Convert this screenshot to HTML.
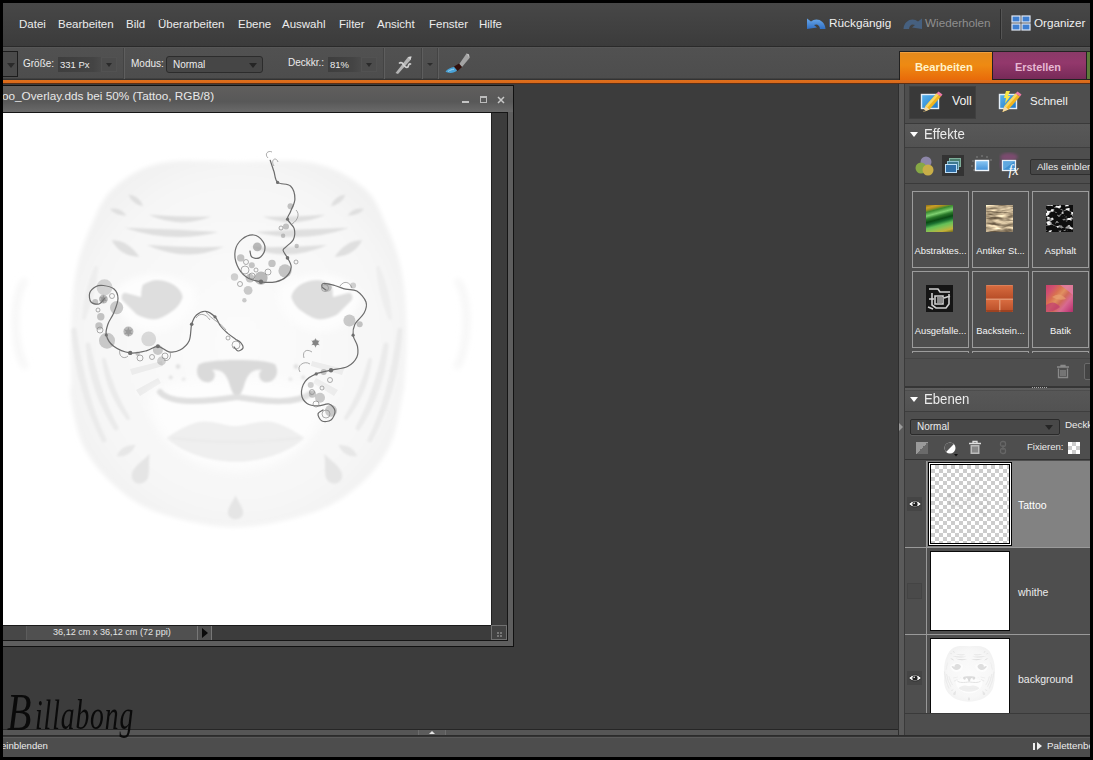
<!DOCTYPE html>
<html lang="de">
<head>
<meta charset="utf-8">
<title>Tattoo_Overlay.dds</title>
<style>
*{box-sizing:border-box;margin:0;padding:0}
html,body{width:1093px;height:760px;overflow:hidden;background:#000}
body{position:relative;font-family:"Liberation Sans",sans-serif;font-size:11px;color:#e6e6e6}
.a{position:absolute}
.t{position:absolute;white-space:nowrap;line-height:14px}
#app{position:absolute;left:3px;top:3px;width:1087px;height:754px;background:#3c3c3c;overflow:hidden}
/* all children of #app use page coords via offset wrapper */
#pg{position:absolute;left:-3px;top:-3px;width:1093px;height:760px}
#menubar{left:3px;top:3px;width:1087px;height:44px;background:linear-gradient(#474747,#404040 60%,#3b3b3b)}
#optbar{left:3px;top:47px;width:1087px;height:33px;background:linear-gradient(#5a5a5a 0,#515151 4%,#4d4d4d 94%,#333 97%)}
#orange{left:3px;top:80px;width:1087px;height:4px;background:linear-gradient(#e0701c 0,#d8681a 74%,#5a3018 76%)}
.menu{top:17px;font-size:11.5px;color:#ececec}
.tri{width:0;height:0;border-style:solid;border-width:5px 4px 0 4px;border-color:#222 transparent transparent transparent}
.opt{font-size:10px;color:#ececec}
.chk{background-color:#fff;background-image:linear-gradient(45deg,#ccc 25%,transparent 25%,transparent 75%,#ccc 75%),linear-gradient(45deg,#ccc 25%,transparent 25%,transparent 75%,#ccc 75%)}
.cell{width:57px;height:77px;border:1px solid #9c9c9c;background:#4e4e4e}
.th{width:27px;height:27px}
.lbl{width:57px;text-align:center;font-size:9.4px;color:#f4f4f4}
.sg{font-family:'Liberation Serif','DejaVu Serif',serif;font-style:italic;line-height:normal;color:#0a0a0a}
</style>
</head>
<body>
<div id="app"><div id="pg">

<!-- MENU BAR -->
<div class="a" id="menubar"></div>
<div class="a" style="left:3px;top:46px;width:1087px;height:1px;background:#2a2a2a"></div>
<div class="t menu" style="left:19px">Datei</div>
<div class="t menu" style="left:58px">Bearbeiten</div>
<div class="t menu" style="left:126px">Bild</div>
<div class="t menu" style="left:158px">Überarbeiten</div>
<div class="t menu" style="left:238px">Ebene</div>
<div class="t menu" style="left:282px">Auswahl</div>
<div class="t menu" style="left:339px">Filter</div>
<div class="t menu" style="left:377px">Ansicht</div>
<div class="t menu" style="left:429px">Fenster</div>
<div class="t menu" style="left:479px">Hilfe</div>

<!-- OPTIONS BAR -->
<div class="a" id="optbar"></div>
<div class="a" id="orange"></div>

<!-- WORKSPACE / DOCUMENT -->
<!-- options bar content -->
<div class="a" style="left:3px;top:51px;width:15px;height:26px;border:1px solid #1c1c1c;border-left:none;background:#4a4a4a"></div>
<div class="a tri" style="left:7px;top:63px;border-top-color:#2a2a2a"></div>
<div class="t opt" style="left:23px;top:57px">Größe:</div>
<div class="a" style="left:58px;top:57px;width:59px;height:15px;background:linear-gradient(90deg,#3e3e3e,#444 60%,#4c4c4c 75%)"></div>
<div class="a" style="left:101px;top:57px;width:16px;height:15px;background:#4c4c4c;border:1px solid #525252"></div>
<div class="a tri" style="left:106px;top:63px;border-width:4px 3px 0 3px;border-top-color:#2a2a2a"></div>
<div class="t opt" style="left:60px;top:58px;font-size:9.500px">331 Px</div>
<div class="a" style="left:123px;top:48px;width:1px;height:31px;background:#444"></div>
<div class="a" style="left:124px;top:48px;width:1px;height:31px;background:#5e5e5e"></div>
<div class="t opt" style="left:131px;top:57px">Modus:</div>
<div class="a" style="left:166px;top:56px;width:97px;height:17px;background:#464646;border:1px solid #2c2c2c;border-radius:3px"></div>
<div class="t opt" style="left:173px;top:58px">Normal</div>
<div class="a tri" style="left:249px;top:63px;border-top-color:#252525"></div>
<div class="t opt" style="left:288px;top:56px">Deckkr.:</div>
<div class="a" style="left:328px;top:57px;width:49px;height:15px;background:linear-gradient(90deg,#3e3e3e,#444 50%,#4c4c4c 70%)"></div>
<div class="a" style="left:361px;top:57px;width:16px;height:15px;background:#4c4c4c;border:1px solid #525252"></div>
<div class="a tri" style="left:366px;top:63px;border-width:4px 3px 0 3px;border-top-color:#2a2a2a"></div>
<div class="t opt" style="left:330px;top:58px;font-size:9.500px">81%</div>
<div class="a" style="left:383px;top:48px;width:1px;height:31px;background:#444"></div>
<div class="a" style="left:384px;top:48px;width:1px;height:31px;background:#5e5e5e"></div>
<div class="a" style="left:421px;top:48px;width:1px;height:31px;background:#444"></div>
<div class="a" style="left:422px;top:48px;width:1px;height:31px;background:#5e5e5e"></div>
<div class="a" style="left:437px;top:48px;width:1px;height:31px;background:#444"></div>
<div class="a" style="left:438px;top:48px;width:1px;height:31px;background:#5e5e5e"></div>
<svg class="a" style="left:392px;top:53px" width="24" height="24" viewBox="0 0 24 24"><path d="M3.500 20 L16 4 L19.500 3.500 L18.500 7 L6 21Z" fill="#b4b4b4"/><path d="M16 4L19.500 3.500L18.500 7Z" fill="#d8d8d8"/><path d="M7 10.500c2.500-2.500 4 .5 5.500 2.500c1.500 2 3.500 2 4-.5c.3-1.500 1.500-2 2.500-1" stroke="#cfcfcf" stroke-width="1.700" fill="none"/></svg>
<div class="a tri" style="left:427px;top:63px;border-width:3.500px 3px 0 3px;border-top-color:#2c2c2c"></div>
<svg class="a" style="left:444px;top:50px" width="28" height="28" viewBox="0 0 28 28"><path d="M15 14.500 L22.500 3.500 L25 4.500 L25.500 8 L18 17Z" fill="#a4a4a4"/><path d="M22.500 3.500L25 4.500L25.500 8Z" fill="#c4c4c4"/><path d="M10 16.500 L15 13.500 L18 17 L13.500 21Z" fill="#32100c"/><path d="M1.500 21.500c2-2.500 5.500-4 8.500-4.500l3 3.500c-2.500 2.500-8 3.500-11.500 1z" fill="#4aa3d8"/><path d="M4 21.500c2-1.500 4-2 6-2.300" stroke="#9fd4f0" stroke-width="1" fill="none"/></svg>

<!-- document window -->
<div class="a" style="left:3px;top:85px;width:511px;height:562px;background:#111"></div>
<div class="a" style="left:3px;top:86px;width:510px;height:560px;background:#5e5e5e"></div>
<div class="a" style="left:3px;top:86px;width:510px;height:26px;background:linear-gradient(#605e5d,#585858 60%,#6a6a6a)"></div>
<div class="a" style="left:3px;top:112px;width:505px;height:529px;background:#151515"></div>
<div class="a" style="left:3px;top:113px;width:504px;height:527px;background:#3c3c3c"></div>
<div class="t" style="left:2px;top:88.500px;font-size:11.750px;color:#e8e8e8">oo_Overlay.dds bei 50% (Tattoo, RGB/8)</div>
<div class="a" style="left:462px;top:101px;width:7px;height:2px;background:#c4c4c4"></div>
<div class="a" style="left:480px;top:96px;width:7px;height:7px;border:1px solid #bcbcbc;border-top-width:2px"></div>
<svg class="a" style="left:497px;top:96px" width="8" height="8" viewBox="0 0 8 8"><path d="M1 1L7 7M7 1L1 7" stroke="#c8c8c8" stroke-width="1.500"/></svg>
<!-- canvas -->
<div class="a" id="canvas" style="left:3px;top:113px;width:488px;height:512px;background:#fff;overflow:hidden">
<!--FACE-START-->
<svg width="488" height="513" viewBox="0 0 488 513" style="position:absolute;left:0;top:0">
<defs>
<filter id="bl6" x="-20%" y="-20%" width="140%" height="140%"><feGaussianBlur stdDeviation="5"/></filter>
<filter id="bl4" x="-20%" y="-20%" width="140%" height="140%"><feGaussianBlur stdDeviation="3"/></filter>
<filter id="bl3" x="-20%" y="-20%" width="140%" height="140%"><feGaussianBlur stdDeviation="2"/></filter>
<filter id="bl2" x="-20%" y="-20%" width="140%" height="140%"><feGaussianBlur stdDeviation="1.1"/></filter>
<filter id="bl1" x="-20%" y="-20%" width="140%" height="140%"><feGaussianBlur stdDeviation=".6"/></filter>
<radialGradient id="fg" cx="50%" cy="50%" r="56%"><stop offset="0" stop-color="#fbfbfb"/><stop offset=".75" stop-color="#f7f7f7"/><stop offset="1" stop-color="#f1f1f1"/></radialGradient>
</defs>
<g transform="translate(-3,-113)">
<g filter="url(#bl4)" fill="none" stroke="#f3f3f3" stroke-width="5"><path d="M26 280C12 290 12 350 26 368"/><path d="M456 280C470 290 470 350 456 368"/></g>
<g id="facecore">
<path filter="url(#bl3)" fill="url(#fg)" d="M161.0 163.0C181.6 158.7 211.7 162.0 237.0 162.0C262.3 162.0 291.8 158.7 313.0 163.0C334.2 167.3 351.8 177.7 364.0 188.0C376.2 198.3 379.8 211.5 386.0 225.0C392.2 238.5 397.6 252.5 401.0 269.0C404.4 285.5 405.9 305.7 406.5 324.0C407.1 342.3 405.4 366.7 404.6 379.0C403.9 391.3 404.4 387.0 402.0 398.0C399.6 409.0 396.8 430.8 390.0 445.0C383.2 459.2 374.2 471.8 361.5 483.0C348.8 494.2 335.0 504.7 314.0 512.0C293.0 519.3 261.7 527.0 235.5 527.0C209.3 527.0 177.6 519.3 157.0 512.0C136.4 504.7 124.3 494.2 112.0 483.0C99.7 471.8 89.8 459.2 83.0 445.0C76.2 430.8 72.9 409.0 71.0 398.0C69.1 387.0 71.5 391.3 71.5 379.0C71.5 366.7 70.4 342.3 71.3 324.0C72.2 305.7 73.4 285.5 76.8 269.0C80.2 252.5 85.4 238.5 91.6 225.0C97.8 211.5 102.1 198.3 113.7 188.0C125.3 177.7 140.4 167.3 161.0 163.0Z"/>
<g filter="url(#bl2)" fill="#dfdfdf">
<path d="M148.700 214.800Q180 217 211.300 216.600Q180 229 148.700 214.800Z"/>
<path d="M124.700 227.700Q172 229 218.600 232Q172 244 124.700 227.700Z"/>
<path d="M146.800 245Q187 248 224 246.800Q187 263 146.800 245Z"/>
<path d="M111.800 240.200Q128 240 139.400 257Q120 256 111.800 240.200Z"/>
<path d="M128.400 194.500Q140 196 143 206.300Q132 204 128.400 194.500Z"/>
<path d="M110 209Q120 207 126.500 215.500Q116 216 110 209Z"/>
<path d="M74 330Q78 390 104 440Q84 400 74 330Z" stroke="#ebebeb" stroke-width="5" stroke-linejoin="round" fill="#ebebeb"/>
<path d="M88 345Q92 390 116 428Q98 395 88 345Z" stroke="#ebebeb" stroke-width="5" stroke-linejoin="round" fill="#ebebeb"/>
<path d="M104 360Q108 392 128 418Q112 392 104 360Z" stroke="#ebebeb" stroke-width="4" stroke-linejoin="round" fill="#ebebeb"/>
<path d="M96 268Q86 290 84 318Q94 292 96 268Z" stroke="#eeeeee" stroke-width="4" stroke-linejoin="round" fill="#eeeeee"/>
<path fill="#e5e5e5" d="M149.900 453.700C148 462 150 470 148 478C144 486 134 485 132 478C130 468 142 462 149.900 453.700Z"/>
<path fill="#e7e7e7" d="M116.600 456Q122 444 135.600 445Q130 458 116.600 456Z"/>
<circle cx="178" cy="366.500" r="2.200"/><circle cx="170.800" cy="377.600" r="2"/><circle cx="183.600" cy="379.400" r="2"/>
</g>
<path filter="url(#bl4)" fill="#fdfdfd" d="M112 296C125 272 165 266 196 288C200 310 178 334 150 332C128 330 118 312 112 296Z"/>
<path filter="url(#bl2)" fill="#dedede" stroke="#fefefe" stroke-width="3.500" paint-order="stroke" d="M142.500 285C147 282 152 280 157.100 280C165 280 172 283 176.200 286.600C180 290 182 293 182.800 296.900C181 303 177 308 171.800 311.500C166 316 160 319 154.200 319.500C147 319 141 317 136.600 314.400L123 301Q119 296 124.500 292.500L141 297Q141 290 142.500 285Z"/>
<g filter="url(#bl1)" fill="#ececec"><path d="M130 369L162 361L163 366L132 375Z"/><path d="M136 390L158 378L161 383L140 396Z"/></g>
<g transform="translate(474,0) scale(-1,1)"><g filter="url(#bl2)" fill="#dfdfdf">
<path d="M148.700 214.800Q180 217 211.300 216.600Q180 229 148.700 214.800Z"/>
<path d="M124.700 227.700Q172 229 218.600 232Q172 244 124.700 227.700Z"/>
<path d="M146.800 245Q187 248 224 246.800Q187 263 146.800 245Z"/>
<path d="M111.800 240.200Q128 240 139.400 257Q120 256 111.800 240.200Z"/>
<path d="M128.400 194.500Q140 196 143 206.300Q132 204 128.400 194.500Z"/>
<path d="M110 209Q120 207 126.500 215.500Q116 216 110 209Z"/>
<path d="M74 330Q78 390 104 440Q84 400 74 330Z" stroke="#ebebeb" stroke-width="5" stroke-linejoin="round" fill="#ebebeb"/>
<path d="M88 345Q92 390 116 428Q98 395 88 345Z" stroke="#ebebeb" stroke-width="5" stroke-linejoin="round" fill="#ebebeb"/>
<path d="M104 360Q108 392 128 418Q112 392 104 360Z" stroke="#ebebeb" stroke-width="4" stroke-linejoin="round" fill="#ebebeb"/>
<path d="M96 268Q86 290 84 318Q94 292 96 268Z" stroke="#eeeeee" stroke-width="4" stroke-linejoin="round" fill="#eeeeee"/>
<path fill="#e5e5e5" d="M149.900 453.700C148 462 150 470 148 478C144 486 134 485 132 478C130 468 142 462 149.900 453.700Z"/>
<path fill="#e7e7e7" d="M116.600 456Q122 444 135.600 445Q130 458 116.600 456Z"/>
<circle cx="178" cy="366.500" r="2.200"/><circle cx="170.800" cy="377.600" r="2"/><circle cx="183.600" cy="379.400" r="2"/>
</g>
<path filter="url(#bl4)" fill="#fdfdfd" d="M112 296C125 272 165 266 196 288C200 310 178 334 150 332C128 330 118 312 112 296Z"/>
<path filter="url(#bl2)" fill="#dedede" stroke="#fefefe" stroke-width="3.500" paint-order="stroke" d="M142.500 285C147 282 152 280 157.100 280C165 280 172 283 176.200 286.600C180 290 182 293 182.800 296.900C181 303 177 308 171.800 311.500C166 316 160 319 154.200 319.500C147 319 141 317 136.600 314.400L123 301Q119 296 124.500 292.500L141 297Q141 290 142.500 285Z"/>
<g filter="url(#bl1)" fill="#ececec"><path d="M130 369L162 361L163 366L132 375Z"/><path d="M136 390L158 378L161 383L140 396Z"/></g></g>
<path filter="url(#bl6)" fill="#fdfdfd" d="M150 392C170 372 300 372 324 392C330 420 300 470 237 472C174 470 144 420 150 392Z"/>
<g filter="url(#bl2)">
<path fill="#dadada" d="M198 366C198 358 276 358 276 366C280 376 272 384 264 382C258 380 258 372 262 370C250 368 246 378 244 386C242 392 240 396 237 396C234 396 232 392 230 386C228 378 224 368 212 370C216 372 216 380 210 382C202 384 194 376 198 366Z"/>
<path fill="none" stroke="#e0e0e0" stroke-width="6" stroke-linecap="round" d="M160 392C170 404 205 402 237 397C269 402 296 404 310 394"/>
<path fill="#efefef" d="M166.500 438C180 428 195 421 204.600 421.400C215 421 226 426 235.500 426C245 426 256 421 266.400 421.400C276 421 291 428 304.500 438C290 452 262 462 235.500 461.800C209 462 181 452 166.500 438Z"/>
<path fill="none" stroke="#e8e8e8" stroke-width="1.500" d="M172 438Q236 446 300 438"/>
<path fill="#e5e5e5" d="M235.500 495C238 502 244 508 243 514C241 521 230 521 228 514C227 508 233 502 235.500 495Z"/>
</g>
</g>
<g id="swirls">
<g fill="#8e8e8e" filter="url(#bl1)"><circle cx="257.3" cy="246.8" r="4.4" opacity="0.60"/><circle cx="240.7" cy="257.9" r="3.7" opacity="0.50"/><circle cx="251.8" cy="265.2" r="3.0" opacity="0.50"/><circle cx="261.0" cy="278.1" r="6.6" opacity="0.60"/><circle cx="250.0" cy="278.1" r="4.4" opacity="0.50"/><circle cx="285.0" cy="270.8" r="6.6" opacity="0.50"/><circle cx="272.0" cy="263.4" r="3.7" opacity="0.50"/><circle cx="248.1" cy="290.3" r="4.4" opacity="0.45"/><circle cx="244.4" cy="300.2" r="2.2" opacity="0.45"/><circle cx="234.5" cy="277.0" r="3.7" opacity="0.40"/><circle cx="290.5" cy="206.3" r="3.0" opacity="0.50"/><circle cx="286.0" cy="226.6" r="3.0" opacity="0.50"/><circle cx="296.7" cy="246.0" r="2.2" opacity="0.50"/><circle cx="283.1" cy="235.8" r="2.2" opacity="0.50"/><circle cx="104.5" cy="287.3" r="8.0" opacity="0.35"/><circle cx="103.4" cy="299.1" r="4.4" opacity="0.60"/><circle cx="95.2" cy="302.0" r="3.0" opacity="0.50"/><circle cx="116.6" cy="307.6" r="6.6" opacity="0.45"/><circle cx="100.8" cy="316.8" r="3.7" opacity="0.50"/><circle cx="99.0" cy="326.0" r="3.7" opacity="0.50"/><circle cx="107.0" cy="340.7" r="8.0" opacity="0.45"/><circle cx="128.4" cy="331.5" r="5.0" opacity="0.60"/><circle cx="148.7" cy="338.9" r="7.4" opacity="0.30"/><circle cx="157.9" cy="350.0" r="5.0" opacity="0.45"/><circle cx="161.5" cy="361.0" r="4.4" opacity="0.40"/><circle cx="137.6" cy="353.6" r="2.2" opacity="0.50"/><circle cx="327.3" cy="287.3" r="4.4" opacity="0.40"/><circle cx="353.1" cy="285.5" r="3.0" opacity="0.40"/><circle cx="349.4" cy="320.5" r="6.0" opacity="0.45"/><circle cx="359.7" cy="324.2" r="3.0" opacity="0.50"/><circle cx="315.5" cy="342.6" r="3.0" opacity="0.70"/><circle cx="323.6" cy="372.0" r="3.0" opacity="0.50"/><circle cx="312.5" cy="394.1" r="3.7" opacity="0.45"/><circle cx="320.0" cy="397.8" r="5.0" opacity="0.45"/><circle cx="331.0" cy="410.7" r="6.0" opacity="0.45"/><circle cx="310.7" cy="385.0" r="3.0" opacity="0.40"/></g>
<g fill="none" stroke="#6c6c6c" stroke-width="1.200" stroke-linecap="round">
<path d="M270.2 160.3C270.8 162.1 272.7 167.6 273.9 171.3C275.1 175.0 274.8 180.0 277.6 182.4C280.4 184.8 287.6 183.2 290.5 186.0C293.4 188.8 294.9 194.6 294.9 198.9C294.9 203.2 291.7 208.4 290.5 211.8C289.3 215.2 286.9 216.4 287.5 219.2C288.1 222.0 293.1 225.0 294.1 228.4C295.1 231.8 294.8 236.3 293.4 239.4C292.0 242.5 287.7 245.0 286.0 246.8C284.3 248.7 282.9 248.7 283.1 250.5C283.4 252.3 286.1 255.1 287.5 257.9C288.9 260.7 291.4 263.9 291.2 267.1C290.9 270.3 288.6 274.6 286.0 277.0C283.4 279.4 279.9 281.0 275.7 281.8C271.5 282.6 265.9 282.6 261.0 281.8C256.1 281.0 250.3 279.8 246.3 277.0C242.3 274.2 238.9 269.6 237.1 265.2C235.2 260.8 234.4 254.8 235.2 250.5C236.0 246.2 238.7 242.0 241.8 239.4C244.9 236.8 250.1 234.7 253.6 235.0C257.1 235.3 260.9 238.7 262.8 241.3C264.7 243.9 265.3 247.7 264.7 250.5C264.1 253.3 261.3 256.8 259.2 257.9C257.1 259.0 253.3 258.2 251.8 257.1C250.3 256.0 250.3 252.0 250.0 251.0"/>
<path d="M104.5 298.4C103.6 299.3 101.2 303.4 99.0 304.0C96.8 304.6 92.5 303.8 91.0 302.0C89.5 300.2 88.9 295.6 89.7 293.0C90.5 290.4 93.7 287.8 96.0 286.5C98.3 285.2 100.4 285.1 103.4 285.5C106.4 285.9 111.6 286.9 114.0 289.0C116.4 291.1 118.0 294.4 118.0 298.4C118.0 302.4 115.4 308.7 113.7 313.0C112.0 317.3 109.2 320.3 108.0 324.0C106.8 327.7 105.3 331.3 106.3 335.0C107.2 338.7 109.7 343.3 113.7 346.3C117.7 349.3 124.7 352.2 130.2 352.9C135.7 353.6 142.2 351.8 146.8 350.7C151.4 349.6 154.2 346.1 157.9 346.3C161.6 346.5 165.2 351.2 168.9 351.8C172.6 352.4 176.6 351.9 180.0 350.0C183.4 348.1 187.2 345.0 189.2 340.7C191.1 336.4 190.5 328.5 191.7 324.2C192.9 319.9 194.2 317.1 196.5 315.0C198.8 312.9 202.6 311.0 205.7 311.3C208.8 311.6 212.5 314.4 215.0 316.8C217.5 319.2 218.4 323.2 220.5 326.0C222.6 328.8 225.4 331.2 227.8 333.4C230.2 335.5 233.0 337.4 235.2 338.9C237.3 340.4 239.4 341.1 240.7 342.6C242.0 344.1 243.4 346.6 243.0 348.0C242.6 349.4 239.5 351.2 238.0 351.0C236.5 350.8 234.7 347.7 234.0 347.0"/>
<path d="M326.0 290.0C325.3 289.5 322.4 288.1 322.0 287.0C321.6 285.9 321.5 283.8 323.6 283.5C325.7 283.2 331.0 284.6 334.7 285.5C338.4 286.4 342.0 288.3 345.7 289.2C349.4 290.1 353.4 288.9 356.8 291.0C360.2 293.1 364.8 298.3 366.0 302.0C367.2 305.7 366.0 309.4 364.1 313.1C362.2 316.8 356.7 320.5 354.9 324.2C353.1 327.9 352.7 331.5 353.1 335.2C353.5 338.9 356.9 342.6 357.5 346.3C358.1 350.0 358.4 353.9 356.8 357.3C355.2 360.7 351.9 364.4 347.6 366.5C343.3 368.6 336.2 369.0 331.0 370.2C325.8 371.4 320.5 372.0 316.2 373.9C311.9 375.8 307.6 377.9 305.2 381.3C302.8 384.7 301.2 390.4 301.5 394.1C301.8 397.8 304.2 401.4 307.0 403.4C309.8 405.4 314.4 405.8 318.1 405.9C321.8 406.0 326.3 403.1 329.1 404.0C331.9 404.9 334.7 408.3 335.0 411.0C335.3 413.7 333.2 418.3 331.0 420.0C328.8 421.7 324.2 422.0 322.0 421.0C319.8 420.0 317.8 415.8 318.0 414.0C318.2 412.2 322.2 410.7 323.0 410.0"/>
</g>
<g fill="none" stroke="#8a8a8a" stroke-width=".7"><circle cx="245.0" cy="270.0" r="4.0"/><circle cx="252.0" cy="276.0" r="3.0"/><circle cx="240.0" cy="284.0" r="2.5"/><circle cx="268.0" cy="272.0" r="3.0"/><circle cx="246.0" cy="262.0" r="2.5"/><circle cx="256.0" cy="270.0" r="2.0"/><circle cx="100.0" cy="330.0" r="3.0"/><circle cx="140.0" cy="358.0" r="3.0"/><circle cx="236.0" cy="345.0" r="4.0"/><circle cx="228.0" cy="338.0" r="2.0"/><circle cx="326.0" cy="414.0" r="4.0"/><circle cx="316.0" cy="404.0" r="3.0"/><circle cx="312.0" cy="392.0" r="2.5"/><circle cx="325.0" cy="288.0" r="3.5"/><circle cx="152.0" cy="357.0" r="2.5"/><circle cx="165.0" cy="356.0" r="3.0"/><circle cx="112.0" cy="296.0" r="2.5"/><circle cx="98.0" cy="310.0" r="2.0"/><circle cx="330.0" cy="380.0" r="2.5"/><circle cx="322.0" cy="388.0" r="2.0"/><circle cx="296.0" cy="262.0" r="2.0"/><circle cx="281.0" cy="228.0" r="2.0"/>
<path d="M206 312C212 320 220 322 226 330M196 318C200 312 206 314 210 320M300 372C296 366 304 360 310 364M274 166C270 160 276 156 278 162M268 158C264 154 268 150 272 152M312 352C306 348 302 352 304 358M340 286C344 280 350 282 352 288M292 224C298 220 300 214 296 210M120 350C118 356 124 360 128 356M170 352C172 358 168 362 164 360"/>
</g>
<g fill="#6e6e6e"><circle cx="277.6" cy="182.4" r="1.6"/><circle cx="287.5" cy="219.2" r="1.6"/><circle cx="287.5" cy="257.9" r="1.8"/><circle cx="261.0" cy="281.8" r="2.2"/><circle cx="106.3" cy="335.0" r="1.6"/><circle cx="130.2" cy="352.9" r="2.2"/><circle cx="157.9" cy="346.3" r="2.0"/><circle cx="191.7" cy="324.2" r="1.8"/><circle cx="215.0" cy="316.8" r="1.6"/><circle cx="353.1" cy="335.2" r="1.6"/><circle cx="331.0" cy="370.2" r="2.2"/><circle cx="316.2" cy="373.9" r="1.6"/></g>
<g fill="#7a7a7a" opacity=".8"><path d="M315.500 338l1.200 3 3-.5-2 2.400 2 2.400-3-.5-1.200 3-1.200-3-3 .5 2-2.400-2-2.400 3 .5z"/><path d="M128.400 327l1.200 3 3-.5-2 2.400 2 2.400-3-.5-1.200 3-1.200-3-3 .5 2-2.400-2-2.400 3 .5z" opacity=".6"/><path d="M103.400 295l1 2.500 2.500-.4-1.700 2 1.700 2-2.500-.4-1 2.500-1-2.500-2.500.4 1.700-2-1.700-2 2.500.4z" opacity=".7"/></g>
</g></g></svg>
<!--FACE-END-->

</div>
<div class="a" style="left:3px;top:625px;width:504px;height:1px;background:#1a1a1a"></div>
<div class="a" style="left:491px;top:113px;width:1px;height:513px;background:#222"></div>
<!-- doc status -->
<div class="a" style="left:3px;top:626px;width:209px;height:14px;background:#505050"></div>
<div class="a" style="left:3px;top:626px;width:23px;height:14px;background:#474747"></div>
<div class="a" style="left:26px;top:626px;width:1px;height:14px;background:#5c5c5c"></div>
<div class="a" style="left:197px;top:626px;width:1px;height:14px;background:#777"></div>
<div class="a" style="left:211px;top:626px;width:1px;height:14px;background:#777"></div>
<div class="a" style="left:202px;top:628px;width:0;height:0;border-left:6px solid #0a0a0a;border-top:5px solid transparent;border-bottom:5px solid transparent"></div>
<div class="t" style="left:53px;top:625px;font-size:9.1px;color:#e4e4e4">36,12 cm x 36,12 cm (72 ppi)</div>
<div class="a" style="left:491px;top:625px;width:16px;height:15px;border:1px solid #707070;background:#424242"></div>
<div class="a" style="left:497px;top:632px;width:2px;height:2px;background:#777;box-shadow:3px 0 #777,0 3px #777,3px 3px #777"></div>


<!-- RIGHT PANEL -->
<!-- splitter -->
<div class="a" style="left:899px;top:84px;width:6px;height:653px;background:#5a5a5a"></div>
<div class="a" style="left:898px;top:84px;width:1px;height:653px;background:#2e2e2e"></div>
<div class="a" style="left:904px;top:84px;width:1px;height:653px;background:#3a3a3a"></div>
<div class="a" style="left:899px;top:423px;width:0;height:0;border-left:4px solid #9a9a9a;border-top:4px solid transparent;border-bottom:4px solid transparent"></div>
<div class="a" style="left:905px;top:84px;width:185px;height:653px;background:#4e4e4e"></div>
<!-- top right menubar items -->
<svg class="a" style="left:806px;top:17px" width="21" height="13" viewBox="0 0 21 13"><defs><linearGradient id="ug" x1="0" y1="0" x2="0" y2="1"><stop offset="0" stop-color="#6aa8ea"/><stop offset="1" stop-color="#2f6fc4"/></linearGradient></defs><path d="M1 1.500L1 12L11 10.500L8 8C11 6.500 13.500 8 14 12L19.500 12C19 3 10 0 5 4.500Z" fill="url(#ug)"/></svg>
<div class="t" style="left:829px;top:16px;font-size:11.8px;color:#f0f0f0">Rückgängig</div>
<svg class="a" style="left:902px;top:17px" width="21" height="13" viewBox="0 0 21 13"><path d="M20 1.500L20 12L10 10.500L13 8C10 6.500 7.500 8 7 12L1.500 12C2 3 11 0 16 4.500Z" fill="#46607f"/></svg>
<div class="t" style="left:925px;top:16px;font-size:11.7px;color:#8f8f8f">Wiederholen</div>
<div class="a" style="left:1000px;top:9px;width:1px;height:30px;background:#2c2c2c"></div>
<div class="a" style="left:1001px;top:9px;width:1px;height:30px;background:#555"></div>
<svg class="a" style="left:1011px;top:15px" width="20" height="16" viewBox="0 0 20 16"><g fill="#3f7fd0" stroke="#dfe8f5" stroke-width="1.2"><rect x="1" y="1" width="8" height="6"/><rect x="11" y="1" width="8" height="6"/><rect x="1" y="9" width="8" height="6"/><rect x="11" y="9" width="8" height="6"/></g></svg>
<div class="t" style="left:1034px;top:16px;font-size:11.7px;color:#f0f0f0">Organizer</div>
<!-- tabs -->
<div class="a" style="left:899px;top:51px;width:191px;height:29px;background:#222"></div>
<div class="a" style="left:900px;top:52px;width:92px;height:28px;background:linear-gradient(#e58a1c,#ee8a12 45%,#e86a0a);border-top:1px solid #f0a040"></div>
<div class="t" style="left:915px;top:60px;font-size:11.2px;font-weight:bold;color:#fff3c8">Bearbeiten</div>
<div class="a" style="left:993px;top:52px;width:93px;height:27px;background:linear-gradient(#8a3a68,#93386c 40%,#772a58)"></div>
<div class="t" style="left:1015px;top:60px;font-size:10.9px;font-weight:bold;color:#e6b8d2">Erstellen</div>
<div class="a" style="left:1087px;top:52px;width:3px;height:27px;background:#5b7a3a"></div>
<!-- Voll / Schnell -->
<div class="a" style="left:909px;top:86px;width:67px;height:33px;background:#393939;border:1px solid #404040"></div>
<svg class="a" style="left:919px;top:90px" width="24" height="24" viewBox="0 0 24 24"><defs><linearGradient id="scr" x1="0" y1="0" x2="1" y2="1"><stop offset="0" stop-color="#5ab4ee"/><stop offset="1" stop-color="#1f78c8"/></linearGradient></defs><rect x="2.500" y="4.500" width="17" height="14" fill="url(#scr)" stroke="#e4eef8" stroke-width="1.400"/><path d="M4.500 22L6.500 16L17.500 3.500L22 6.500L10.500 19.500Z" fill="#f2b41e"/><path d="M6.500 16L17.500 3.500L19.500 5L8.500 17.500Z" fill="#f8d860"/><path d="M17.500 3.500L19.500 1.500L23.500 4.500L22 6.500Z" fill="#ee7aa6"/><path d="M4.500 22l2-6 4 3.500z" fill="#f0d8a8"/><path d="M4.500 22l.8-2.300 1.500 1.300z" fill="#444"/></svg>
<div class="t" style="left:952px;top:94px;font-size:12.3px;color:#f2f2f2">Voll</div>
<svg class="a" style="left:997px;top:89px" width="26" height="26" viewBox="0 0 26 26"><rect x="2.500" y="5.500" width="17" height="14" fill="url(#scr)" stroke="#e4eef8" stroke-width="1.400"/><path d="M5.500 23L7.500 17L18.500 4.500L23 7.500L11.500 20.500Z" fill="#f2b41e"/><path d="M7.500 17L18.500 4.500L20.500 6L9.500 18.500Z" fill="#f8d860"/><path d="M18.500 4.500L20.500 2.500L24.500 5.500L23 7.500Z" fill="#ee7aa6"/><path d="M5.500 23l2-6 4 3.500z" fill="#f0d8a8"/><path d="M9 2L13 2L11 7L13.500 7L8 14.500L9 9L7 9Z" fill="#f8e648"/></svg>
<div class="t" style="left:1030px;top:94px;font-size:11.5px;color:#f2f2f2">Schnell</div>
<!-- Effekte header -->
<div class="a" style="left:905px;top:123px;width:185px;height:1px;background:#3a3a3a"></div>
<div class="a" style="left:905px;top:124px;width:185px;height:23px;background:linear-gradient(#585858,#525252)"></div>
<div class="a" style="left:905px;top:147px;width:185px;height:1px;background:#3e3e3e"></div>
<div class="a tri" style="left:910px;top:132px;border-width:5px 4px 0 4px;border-top-color:#fff"></div>
<div class="t" style="left:924px;top:126px;font-size:14.1px;line-height:17px;transform:scaleX(.935);transform-origin:0 50%;color:#ececec">Effekte</div>
<!-- effekte toolbar -->
<svg class="a" style="left:913px;top:154px" width="24" height="24" viewBox="0 0 24 24"><circle cx="13" cy="8" r="5.5" fill="#8d86a8"/><circle cx="8" cy="14" r="5.5" fill="#86a845"/><circle cx="15" cy="16" r="5.5" fill="#c8ae48"/></svg>
<div class="a" style="left:942px;top:155px;width:22px;height:21px;background:#333"></div>
<svg class="a" style="left:944px;top:157px" width="18" height="18" viewBox="0 0 18 18"><rect x="5.5" y="1.5" width="11" height="8" fill="#4b7f6e" stroke="#7fae9a"/><rect x="3.5" y="4.500" width="11" height="8" fill="#3f7a90" stroke="#8fc0d0"/><rect x="1.500" y="7.500" width="11" height="8" fill="#2f6fa8" stroke="#bfe0f8"/></svg>
<svg class="a" style="left:970px;top:153px" width="24" height="24" viewBox="0 0 24 24"><g fill="#9a9a9a"><circle cx="3" cy="8" r=".7"/><circle cx="2" cy="13" r=".7"/><circle cx="4" cy="17" r=".7"/><circle cx="7" cy="4" r=".7"/><circle cx="12" cy="3" r=".7"/><circle cx="17" cy="4" r=".7"/><circle cx="21" cy="7" r=".7"/></g><defs><linearGradient id="sk" x1="0" y1="0" x2="0" y2="1"><stop offset="0" stop-color="#8cc8f4"/><stop offset="1" stop-color="#3f8fd8"/></linearGradient></defs><rect x="5.500" y="7.500" width="13" height="10" fill="url(#sk)" stroke="#f0f6fc" stroke-width="1.400"/></svg>
<svg class="a" style="left:999px;top:151px" width="26" height="28" viewBox="0 0 26 28"><defs><filter id="hz"><feGaussianBlur stdDeviation="1.500"/></filter></defs><ellipse cx="10" cy="6" rx="9" ry="4" fill="#a04a8a" opacity=".55" filter="url(#hz)"/><ellipse cx="3" cy="13" rx="3" ry="5" fill="#8a4a8a" opacity=".35" filter="url(#hz)"/><rect x="3.500" y="9.500" width="13" height="10" fill="#3f8fd0" stroke="#e8f0f8" stroke-width="1.300"/><path d="M4 19L4 10L16 10Z" fill="#7fc0ee" opacity=".5"/><text x="9.500" y="23.500" style="font-family:'Liberation Serif',serif;font-style:italic;font-size:14px" fill="#fff">fx</text></svg>
<div class="a" style="left:1030px;top:159px;width:70px;height:16px;background:#464646;border:1px solid #2e2e2e;border-radius:2px"></div>
<div class="t" style="left:1037px;top:160px;font-size:9.8px;color:#ececec">Alles einblenden</div>
<div class="a" style="left:905px;top:183px;width:185px;height:1px;background:#3a3a3a"></div>
<!-- thumbnails -->
<div class="a cell" style="left:912px;top:191px"></div>
<div class="a cell" style="left:972px;top:191px"></div>
<div class="a cell" style="left:1032px;top:191px"></div>
<div class="a cell" style="left:912px;top:271px"></div>
<div class="a cell" style="left:972px;top:271px"></div>
<div class="a cell" style="left:1032px;top:271px"></div>
<div class="a cell" style="left:912px;top:351px;height:2px;border-bottom:none"></div>
<div class="a cell" style="left:972px;top:351px;height:2px;border-bottom:none"></div>
<div class="a cell" style="left:1032px;top:351px;height:2px;border-bottom:none"></div>
<div class="a th" style="left:926px;top:205px;background:linear-gradient(165deg,#8a6a14 0%,#c8a028 9%,#b09020 14%,#3a8a30 22%,#7ed070 33%,#2a7a2a 42%,#0a4a14 52%,#1a7030 60%,#64c058 70%,#90c050 80%,#c4b038 90%,#6a6418 100%)"></div>
<div class="a th" style="left:986px;top:205px;overflow:hidden"><svg width="27" height="27" viewBox="0 0 27 27"><defs><filter id="st" x="0" y="0" width="100%" height="100%" color-interpolation-filters="sRGB"><feTurbulence type="fractalNoise" baseFrequency=".07 .32" numOctaves="3" seed="4"/><feColorMatrix values="1.200 0 0 0 .16 1.150 0 0 0 .11 1 0 0 0 .06 0 0 0 0 1"/></filter></defs><rect width="27" height="27" fill="#c8b888"/><rect width="27" height="27" filter="url(#st)"/></svg></div>
<div class="a th" style="left:1046px;top:205px;background:#0e0e0e;overflow:hidden"><svg width="27" height="27" viewBox="0 0 27 27"><defs><filter id="as" x="0" y="0" width="100%" height="100%" color-interpolation-filters="sRGB"><feTurbulence type="fractalNoise" baseFrequency=".16 .24" numOctaves="2" seed="7"/><feColorMatrix values="0 0 0 0 0 0 0 0 0 0 0 0 0 0 0 7 0 0 0 -3.700"/><feComposite in="SourceGraphic" operator="in"/></filter></defs><rect width="27" height="27" fill="#f4f4f4" filter="url(#as)"/></svg></div>
<div class="a th" style="left:926px;top:285px;background:#151515;overflow:hidden"><svg width="27" height="27" viewBox="0 0 27 27"><g fill="none" stroke="#cfcfcf" stroke-width="1.600"><path d="M3 4h9l2 3h10M6 8v12l4 3h10l3-4V9M9 11h8v8H9zM3 14h5M18 13l6-2M2 22l5 2"/></g><rect x="11" y="12" width="6" height="6" fill="#8a8a8a"/></svg></div>
<div class="a th" style="left:986px;top:285px;background:#e09470;overflow:hidden;border-radius:1px"><svg width="27" height="27" viewBox="0 0 27 27"><defs><linearGradient id="bk" x1="0" y1="0" x2="0" y2="1"><stop offset="0" stop-color="#d86c40"/><stop offset="1" stop-color="#b84e28"/></linearGradient></defs><g fill="url(#bk)"><rect x="0" y="0.500" width="27" height="13"/><rect x="0" y="15" width="13" height="12"/><rect x="14.500" y="15" width="12.500" height="12"/></g><rect x="0" y="25" width="27" height="2" fill="#8a3a1c" opacity=".6"/></svg></div>
<div class="a th" style="left:1046px;top:285px;background:linear-gradient(130deg,#c8406a 0%,#d05070 18%,#d87050 34%,#e09060 46%,#d06a58 58%,#d86a90 72%,#c84a80 86%,#b03068 100%);overflow:hidden"><svg width="27" height="27" viewBox="0 0 27 27"><path d="M14 0L27 0L27 10Q20 4 14 0Z" fill="#e07aa8" opacity=".8"/><path d="M0 20Q8 14 14 22Q8 27 0 27Z" fill="#c03a70" opacity=".7"/><path d="M6 12Q14 6 20 14Q12 16 6 12Z" fill="#e8a070" opacity=".7"/></svg></div>
<div class="t lbl" style="left:912px;top:244px">Abstraktes...</div>
<div class="t lbl" style="left:972px;top:244px">Antiker St...</div>
<div class="t lbl" style="left:1032px;top:244px">Asphalt</div>
<div class="t lbl" style="left:912px;top:324px">Ausgefalle...</div>
<div class="t lbl" style="left:972px;top:324px">Backstein...</div>
<div class="t lbl" style="left:1032px;top:324px">Batik</div>

<div class="a" style="left:905px;top:353px;width:185px;height:5px;background:#4e4e4e"></div><div class="a" style="left:905px;top:358px;width:185px;height:1px;background:#454545"></div>
<svg class="a" style="left:1056px;top:364px" width="14" height="15" viewBox="0 0 14 15"><path d="M1 3h12M5 3V1.500h4V3M2.500 4.500v9h9v-9M5 6v6M7 6v6M9 6v6" stroke="#8a8a8a" stroke-width="1.3" fill="none"/></svg>
<div class="a" style="left:1084px;top:363px;width:8px;height:17px;border:1px solid #6a6a6a;border-radius:2px;background:#444"></div>
<!-- Ebenen -->
<div class="a" style="left:905px;top:386px;width:185px;height:2px;background:#363636"></div><div class="a" style="left:1032px;top:387px;width:16px;height:1px;background:repeating-linear-gradient(90deg,#aaa 0 1px,transparent 1px 2px)"></div>
<div class="a" style="left:905px;top:388px;width:185px;height:23px;background:linear-gradient(#5e5e5e 0,#5c5c5c 8%,#4a4a4a 10%,#575757 14%,#525252)"></div>
<div class="a" style="left:905px;top:411px;width:185px;height:1px;background:#3e3e3e"></div>
<div class="a tri" style="left:910px;top:397px;border-width:5px 4px 0 4px;border-top-color:#fff"></div>
<div class="t" style="left:924px;top:391px;font-size:14.1px;line-height:17px;transform:scaleX(.935);transform-origin:0 50%;color:#ececec">Ebenen</div>
<div class="a" style="left:910px;top:419px;width:150px;height:16px;background:#484848;border:1px solid #2a2a2a;border-radius:2px;box-shadow:0 1px 0 #5e5e5e"></div>
<div class="t" style="left:917px;top:420px;font-size:10px;color:#ececec">Normal</div>
<div class="a tri" style="left:1045px;top:425px;border-top-color:#252525"></div>
<div class="t" style="left:1065px;top:418px;font-size:9.8px;color:#ececec">Deckkr.:</div>
<!-- layer toolbar -->
<div class="a" style="left:916px;top:442px;width:12px;height:12px;background:linear-gradient(135deg,#9a9a9a 50%,#6a6a6a 50%)"></div>
<svg class="a" style="left:943px;top:441px" width="16" height="16" viewBox="0 0 16 16"><circle cx="7" cy="7" r="5.500" fill="#fff"/><path d="M3.100 10.900A5.500 5.500 0 0 1 10.900 3.100Z" fill="#555"/><path d="M11 13h4l-2 2.500z" fill="#111"/></svg>
<svg class="a" style="left:968px;top:440px" width="14" height="15" viewBox="0 0 14 15"><path d="M1 3.500h12M5 3V1.500h4V3" stroke="#ddd" stroke-width="1.300" fill="none"/><path d="M2.500 5h9v9h-9z" fill="#bbb"/><path d="M5 6.500v6M7 6.500v6M9 6.500v6" stroke="#555" stroke-width="1"/></svg>
<svg class="a" style="left:998px;top:440px" width="10" height="15" viewBox="0 0 10 15"><rect x="2.500" y="1.500" width="5" height="5" rx="2" fill="none" stroke="#666" stroke-width="1.300"/><rect x="2.500" y="8.500" width="5" height="5" rx="2" fill="none" stroke="#666" stroke-width="1.300"/><path d="M5 5v5" stroke="#666" stroke-width="1.300"/></svg>
<div class="t" style="left:1027px;top:440px;font-size:9.5px;color:#ececec">Fixieren:</div>
<div class="a chk" style="left:1068px;top:442px;width:12px;height:12px;background-size:8px 8px;background-position:0 0,4px 4px"></div>
<!-- layers -->
<div class="a" style="left:905px;top:459px;width:185px;height:1px;background:#333"></div>
<div class="a" style="left:927px;top:461px;width:163px;height:86px;background:#828282"></div>
<div class="a" style="left:905px;top:547px;width:185px;height:1px;background:#9a9a9a"></div>
<div class="a" style="left:905px;top:634px;width:185px;height:1px;background:#9a9a9a"></div>
<div class="a" style="left:926px;top:461px;width:1px;height:252px;background:#989898"></div>
<div class="a" style="left:928px;top:462px;width:84px;height:84px;background:#000;border:1px solid #000"></div><div class="a" style="left:929px;top:463px;width:82px;height:82px;border:1px solid #fff"></div>
<div class="a chk" style="left:931px;top:465px;width:78px;height:78px;background-size:8px 8px;background-position:0 0,4px 4px"><svg width="79" height="79" viewBox="0 0 79 79" style="position:absolute;left:0;top:0;opacity:.55"><use href="#swirls" transform="translate(2.670,-13.440) scale(.152)"/></svg></div>
<div class="t" style="left:1018px;top:498px;font-size:10.5px;color:#fff">Tattoo</div>
<div class="a" style="left:930px;top:551px;width:80px;height:80px;background:#fff;border:1px solid #0a0a0a"></div>
<div class="t" style="left:1018px;top:585px;font-size:10.5px;color:#ececec">whithe</div>
<div class="a" style="left:930px;top:638px;width:80px;height:76px;background:#fff;border:1px solid #0a0a0a;border-bottom:none;overflow:hidden">
<svg width="78" height="75" viewBox="0 0 78 75"><use href="#facecore" transform="translate(2.170,-17.440) scale(.152)"/></svg>
</div>
<div class="t" style="left:1018px;top:672px;font-size:10.5px;color:#ececec">background</div>
<div class="a" style="left:907px;top:583px;width:15px;height:16px;border:1px solid #444;background:#4a4a4a"></div>
<div class="a" style="left:907px;top:497px;width:15px;height:14px;background:#454545"></div><svg class="a eye" style="left:908px;top:499px" width="14" height="10" viewBox="0 0 14 10"><path d="M0.500 5Q7-1.500 13.500 5Q7 11.500 0.500 5Z" fill="#f4f4f4" stroke="#222" stroke-width=".8"/><circle cx="7" cy="5" r="2.600" fill="#222"/><circle cx="6.200" cy="4.200" r=".8" fill="#fff"/></svg>
<div class="a" style="left:907px;top:671px;width:15px;height:14px;background:#454545"></div><svg class="a eye" style="left:908px;top:673px" width="14" height="10" viewBox="0 0 14 10"><path d="M0.500 5Q7-1.500 13.500 5Q7 11.500 0.500 5Z" fill="#f4f4f4" stroke="#222" stroke-width=".8"/><circle cx="7" cy="5" r="2.600" fill="#222"/><circle cx="6.200" cy="4.200" r=".8" fill="#fff"/></svg>
<div class="a" style="left:905px;top:713px;width:185px;height:1px;background:#3a3a3a"></div>


<!-- BOTTOM -->
<div class="a" style="left:3px;top:729px;width:895px;height:1px;background:#262626"></div>
<div class="a" style="left:3px;top:730px;width:895px;height:5px;background:#565656"></div>
<div class="a" style="left:3px;top:735px;width:1087px;height:1px;background:#2c2c2c"></div>
<div class="a" style="left:3px;top:736px;width:1087px;height:1px;background:#333"></div>
<div class="a" style="left:3px;top:737px;width:1087px;height:1px;background:#5a5a5a"></div>
<div class="a" style="left:3px;top:738px;width:1087px;height:19px;background:#4d4d4d"></div>
<div class="a" style="left:418px;top:730px;width:28px;height:5px;background:#5c5c5c;border-left:1px solid #6c6c6c;border-right:1px solid #6c6c6c"></div>
<div class="a" style="left:429px;top:731px;width:0;height:0;border-bottom:3px solid #e4e4e4;border-left:3px solid transparent;border-right:3px solid transparent"></div>
<div class="t" style="left:1px;top:739px;font-size:9.6px;color:#ececec">einblenden</div>
<div class="a" style="left:1033px;top:743px;width:2px;height:7px;background:#f0f0f0"></div>
<div class="a" style="left:1037px;top:742px;width:0;height:0;border-left:5px solid #f0f0f0;border-top:4px solid transparent;border-bottom:4px solid transparent"></div>
<div class="t" style="left:1047px;top:739px;font-size:9.8px;color:#ececec">Palettenbereich</div>
<div class="a" id="sig" style="left:0;top:0"><span class="t sg" style="left:7px;top:693.4px;font-size:40px;transform-origin:0 35.6px;transform:scaleY(1.33)">B</span><span class="t sg" style="left:35px;top:704.4px;font-size:27.6px;letter-spacing:.9px;transform-origin:0 24.6px;transform:scaleY(1.52)">illabong</span></div>


</div></div>
</body>
</html>
